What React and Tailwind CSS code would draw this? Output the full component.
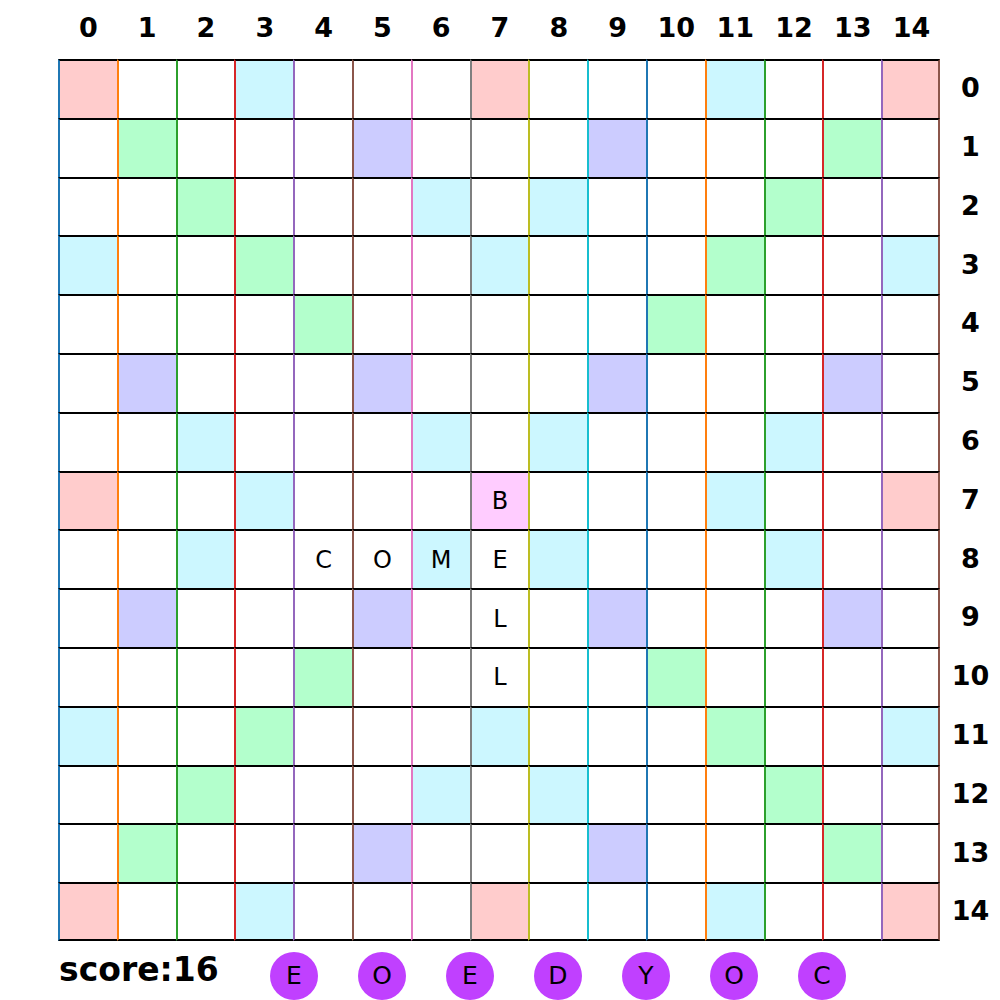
import React from 'react';

// tab10 palette used for the vertical grid lines
const lineColors = ['#1f77b4', '#ff7f0e', '#2ca02c', '#d62728', '#9467bd', '#8c564b', '#e377c2', '#7f7f7f', '#bcbd22', '#17becf'];

const fills = {
  T: 'bg-[#ffcccc]',
  D: 'bg-[#ccf7ff]',
  W: 'bg-[#b3ffcc]',
  L: 'bg-[#ccccff]',
  S: 'bg-[#ffccff]',
  '.': 'bg-white',
};

const layout = [
  'T..D...T...D..T',
  '.W...L...L...W.',
  '..W...D.D...W..',
  'D..W...D...W..D',
  '....W.....W....',
  '.L...L...L...L.',
  '..D...D.D...D..',
  'T..D...S...D..T',
  '..D...D.D...D..',
  '.L...L...L...L.',
  '....W.....W....',
  'D..W...D...W..D',
  '..W...D.D...W..',
  '.W...L...L...W.',
  'T..D...T...D..T',
];

const tiles = {
  '7,7': 'B',
  '8,4': 'C',
  '8,5': 'O',
  '8,6': 'M',
  '8,7': 'E',
  '9,7': 'L',
  '10,7': 'L',
};

const rack = ['E', 'O', 'E', 'D', 'Y', 'O', 'C'];

const idx = Array.from({ length: 15 }, (_, i) => i);

export default function App() {
  return (
    <div className="w-[1000px] h-[1000px] bg-white overflow-hidden text-black font-['DejaVu_Sans',sans-serif]">
      {/* column labels */}
      <div className="flex h-[59px] pl-[59px]">
        {idx.map(c => (
          <div key={c} className="w-[58.8px] flex items-center justify-center text-[27px] font-bold pb-[3px]">
            {c}
          </div>
        ))}
      </div>

      <div className="flex">
        <div className="w-[58px]" />
        {/* board */}
        <div className="grid grid-cols-[repeat(15,58.8px)] grid-rows-[repeat(15,58.8px)] w-[884px]">
          {idx.map(r =>
            idx.map(c => {
              const type = layout[r][c];
              const letter = tiles[`${r},${c}`];
              return (
                <div
                  key={`${r}-${c}`}
                  className={`flex items-center justify-center border-t-2 border-t-black border-l-2 text-[24px] leading-none ${fills[type]} ${
                    r === 14 ? 'border-b-2 border-b-black' : ''
                  } ${c === 14 ? 'border-r-2 border-r-[#8c564b]' : ''}`}
                  style={{ borderLeftColor: lineColors[c % 10] }}
                >
                  {letter}
                </div>
              );
            })
          )}
        </div>
        {/* row labels */}
        <div className="flex flex-col w-[58px]">
          {idx.map(r => (
            <div key={r} className="h-[58.8px] flex items-center justify-center text-[27px] font-bold pr-[1px]">
              {r}
            </div>
          ))}
        </div>
      </div>

      {/* score + rack */}
      <div className="flex items-start">
        <div className="w-[270px] pl-[59px] pt-[12px] text-[33px] font-bold leading-none">score:16</div>
        <div className="flex gap-[40px] pt-[11px]">
          {rack.map((l, i) => (
            <div key={i} className="w-[48px] h-[48px] rounded-full bg-[#c040ff] flex items-center justify-center text-[25px] leading-none">
              {l}
            </div>
          ))}
        </div>
      </div>
    </div>
  );
}
